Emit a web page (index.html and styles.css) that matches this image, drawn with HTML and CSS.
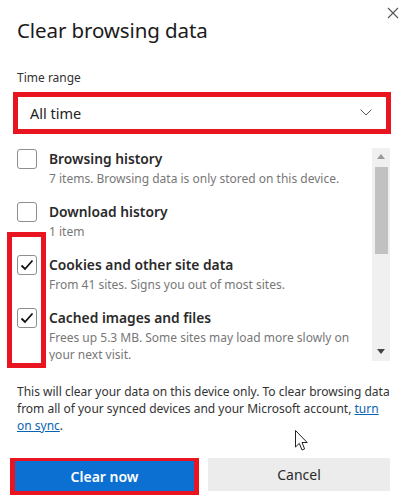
FILE: index.html
```html
<!DOCTYPE html>
<html>
<head>
<meta charset="utf-8">
<link rel="stylesheet" href="styles.css">
</head>
<body>
<div class="dialog">
  <button class="close" aria-label="Close">
    <svg width="12" height="12" viewBox="0 0 12 12"><path d="M1 1L11 11M11 1L1 11" stroke="#555" stroke-width="1.1" fill="none"/></svg>
  </button>
  <h1 class="title">Clear browsing data</h1>
  <div class="label">Time range</div>
  <div class="select">
    <span>All time</span>
    <svg class="chev" width="12" height="7" viewBox="0 0 12 7"><path d="M0.5 0.5L6 6L11.5 0.5" stroke="#555" stroke-width="1" fill="none"/></svg>
  </div>
  <div class="list-wrap">
    <div class="list">
      <div class="item">
        <span class="cb"></span>
        <div class="txt">
          <div class="it-title">Browsing history</div>
          <div class="it-sub">7 items. Browsing data is only stored on this device.</div>
        </div>
      </div>
      <div class="item">
        <span class="cb"></span>
        <div class="txt">
          <div class="it-title">Download history</div>
          <div class="it-sub">1 item</div>
        </div>
      </div>
      <div class="item">
        <span class="cb"><svg width="14" height="12" viewBox="0 0 14 12"><path d="M1.5 6.5L5 10L12.5 1.5" stroke="#111" stroke-width="1.8" fill="none"/></svg></span>
        <div class="txt">
          <div class="it-title">Cookies and other site data</div>
          <div class="it-sub">From 41 sites. Signs you out of most sites.</div>
        </div>
      </div>
      <div class="item">
        <span class="cb"><svg width="14" height="12" viewBox="0 0 14 12"><path d="M1.5 6.5L5 10L12.5 1.5" stroke="#111" stroke-width="1.8" fill="none"/></svg></span>
        <div class="txt">
          <div class="it-title">Cached images and files</div>
          <div class="it-sub">Frees up 5.3 MB. Some sites may load more slowly on your next visit.</div>
        </div>
      </div>
    </div>
    <div class="scrollbar">
      <svg class="arr" width="8" height="5" viewBox="0 0 8 5"><path d="M0 5L4 0L8 5Z" fill="#9a9a9a"/></svg>
      <div class="thumb"></div>
      <div class="track"></div>
      <svg class="arr" width="8" height="5" viewBox="0 0 8 5"><path d="M0 0L4 5L8 0Z" fill="#444"/></svg>
    </div>
    <div class="hl-checks"></div>
  </div>
  <p class="note">This will clear your data on this device only. To clear browsing data from all of your synced devices and your Microsoft account, <a href="#">turn</a> <a href="#">on sync</a>.</p>
  <div class="actions">
    <div class="hl-btn"><button class="primary">Clear now</button></div>
    <button class="secondary">Cancel</button>
  </div>
  <svg class="cursor" width="13" height="22" viewBox="0 0 13 22"><path d="M0.5 0.5V17L4.3 13.4L7 20L9.6 18.9L7 12.5H12.2Z" fill="#fff" stroke="#222" stroke-width="1" stroke-linejoin="round"/></svg>
</div>
</body>
</html>
```
FILE: styles.css
```css
* { box-sizing: border-box; }
html, body { margin: 0; padding: 0; background: #fff; }
body {
  width: 411px;
  height: 502px;
  overflow: hidden;
  font-family: "Noto Sans", "Open Sans", sans-serif;
  color: #1b1b1b;
}
.dialog {
  position: relative;
  padding: 0 21px 0 17px;
  display: flex;
  flex-direction: column;
}
.close {
  position: absolute;
  top: 6px;
  right: 11px;
  border: 0;
  background: none;
  padding: 0;
  width: 14px;
  height: 14px;
  display: flex;
  align-items: center;
  justify-content: center;
}
.title {
  margin: 16px 0 0;
  font-size: 20.5px;
  font-weight: 400;
  line-height: 28px;
  letter-spacing: -0.1px;
}
.label {
  margin-top: 26px;
  font-size: 12px;
  line-height: 16px;
  color: #333;
}
.select {
  margin: 6px 0 0 -4px;
  width: 378px;
  height: 42px;
  border: 5px solid #e8141f;
  display: flex;
  align-items: center;
  justify-content: space-between;
  padding: 0 14px 0 12px;
  font-size: 14.5px;
  color: #222;
}
.chev { margin-top: -2px; }
.list-wrap {
  position: relative;
  margin-top: 14px;
  height: 213px;
  display: flex;
  overflow: visible;
}
.list {
  flex: 1;
  height: 213px;
  overflow: hidden;
  padding-top: 1px;
  display: flex;
  flex-direction: column;
  gap: 0;
}
.item {
  display: flex;
  gap: 12px;
  height: 53px;
  flex-shrink: 0;
}
.cb {
  width: 20px;
  height: 20px;
  border: 1px solid #8e8e8e;
  border-radius: 3px;
  flex-shrink: 0;
  display: flex;
  align-items: center;
  justify-content: center;
  background: #fff;
}
.txt { padding-right: 14px; }
.it-title {
  font-size: 13.8px;
  font-weight: 600;
  line-height: 20px;
  color: #2a2a2a;
}
.it-sub {
  font-size: 12px;
  line-height: 17px;
  color: #777;
}
.it-sub:last-child { margin-top: 1px; }
.scrollbar {
  width: 18px;
  height: 213px;
  background: #f0f0f0;
  display: flex;
  flex-direction: column;
  align-items: center;
  padding: 6px 0 7px;
}
.arr { flex-shrink: 0; }
.thumb {
  margin-top: 8px;
  width: 13px;
  height: 87px;
  background: #c1c1c1;
}
.track { flex: 1; }
.hl-checks {
  position: absolute;
  left: -10px;
  top: 84px;
  width: 39px;
  height: 136px;
  border: 5px solid #e8141f;
}
.note {
  margin: 22px 0 0;
  font-size: 12px;
  line-height: 17px;
  color: #333;
}
.note a { color: #0a64b4; text-decoration: underline; }
.actions {
  margin: 24px 0 0 -7px;
  display: flex;
  gap: 9px;
  align-items: flex-start;
}
.hl-btn {
  width: 189px;
  height: 37px;
  border: 5px solid #e8141f;
  border-top-width: 3px;
  border-bottom-width: 4px;
}
.primary {
  width: 100%;
  height: 100%;
  border: 0;
  background: #0c70d2;
  color: #fff;
  font-family: inherit;
  font-size: 14px;
  font-weight: 600;
}
.secondary {
  width: 182px;
  height: 33px;
  border: 0;
  background: #ececec;
  color: #2a2a2a;
  font-family: inherit;
  font-size: 14px;
  font-weight: 400;
}
.cursor {
  position: absolute;
  left: 295px;
  top: 430px;
}
```
